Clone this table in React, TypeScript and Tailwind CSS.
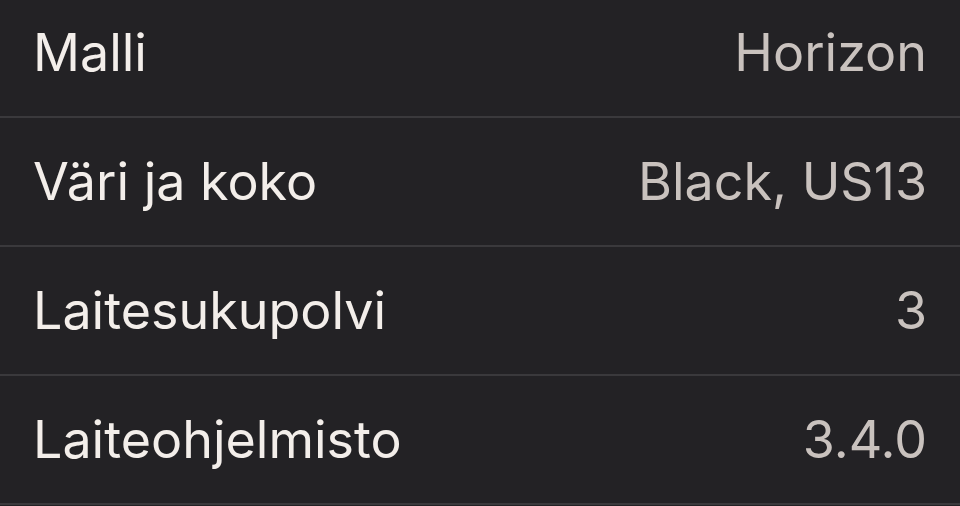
const rows = [
  { label: "Malli", value: "Horizon" },
  { label: "Väri ja koko", value: "Black, US13" },
  { label: "Laitesukupolvi", value: "3" },
  { label: "Laiteohjelmisto", value: "3.4.0" },
];

export default function App() {
  return (
    <div className="h-[506px] w-[960px] overflow-hidden bg-[#232225] font-['Inter',sans-serif]">
      <div className="-mt-[11px]">
        {rows.map((r) => (
          <div
            key={r.label}
            className="flex h-[129px] items-center justify-between border-b-2 border-[#3a393c] px-[33px]"
          >
            <span className="text-[52px] leading-none text-[#f3eeea]">{r.label}</span>
            <span className="text-[52px] leading-none text-[#c9c2be]">{r.value}</span>
          </div>
        ))}
      </div>
    </div>
  );
}
